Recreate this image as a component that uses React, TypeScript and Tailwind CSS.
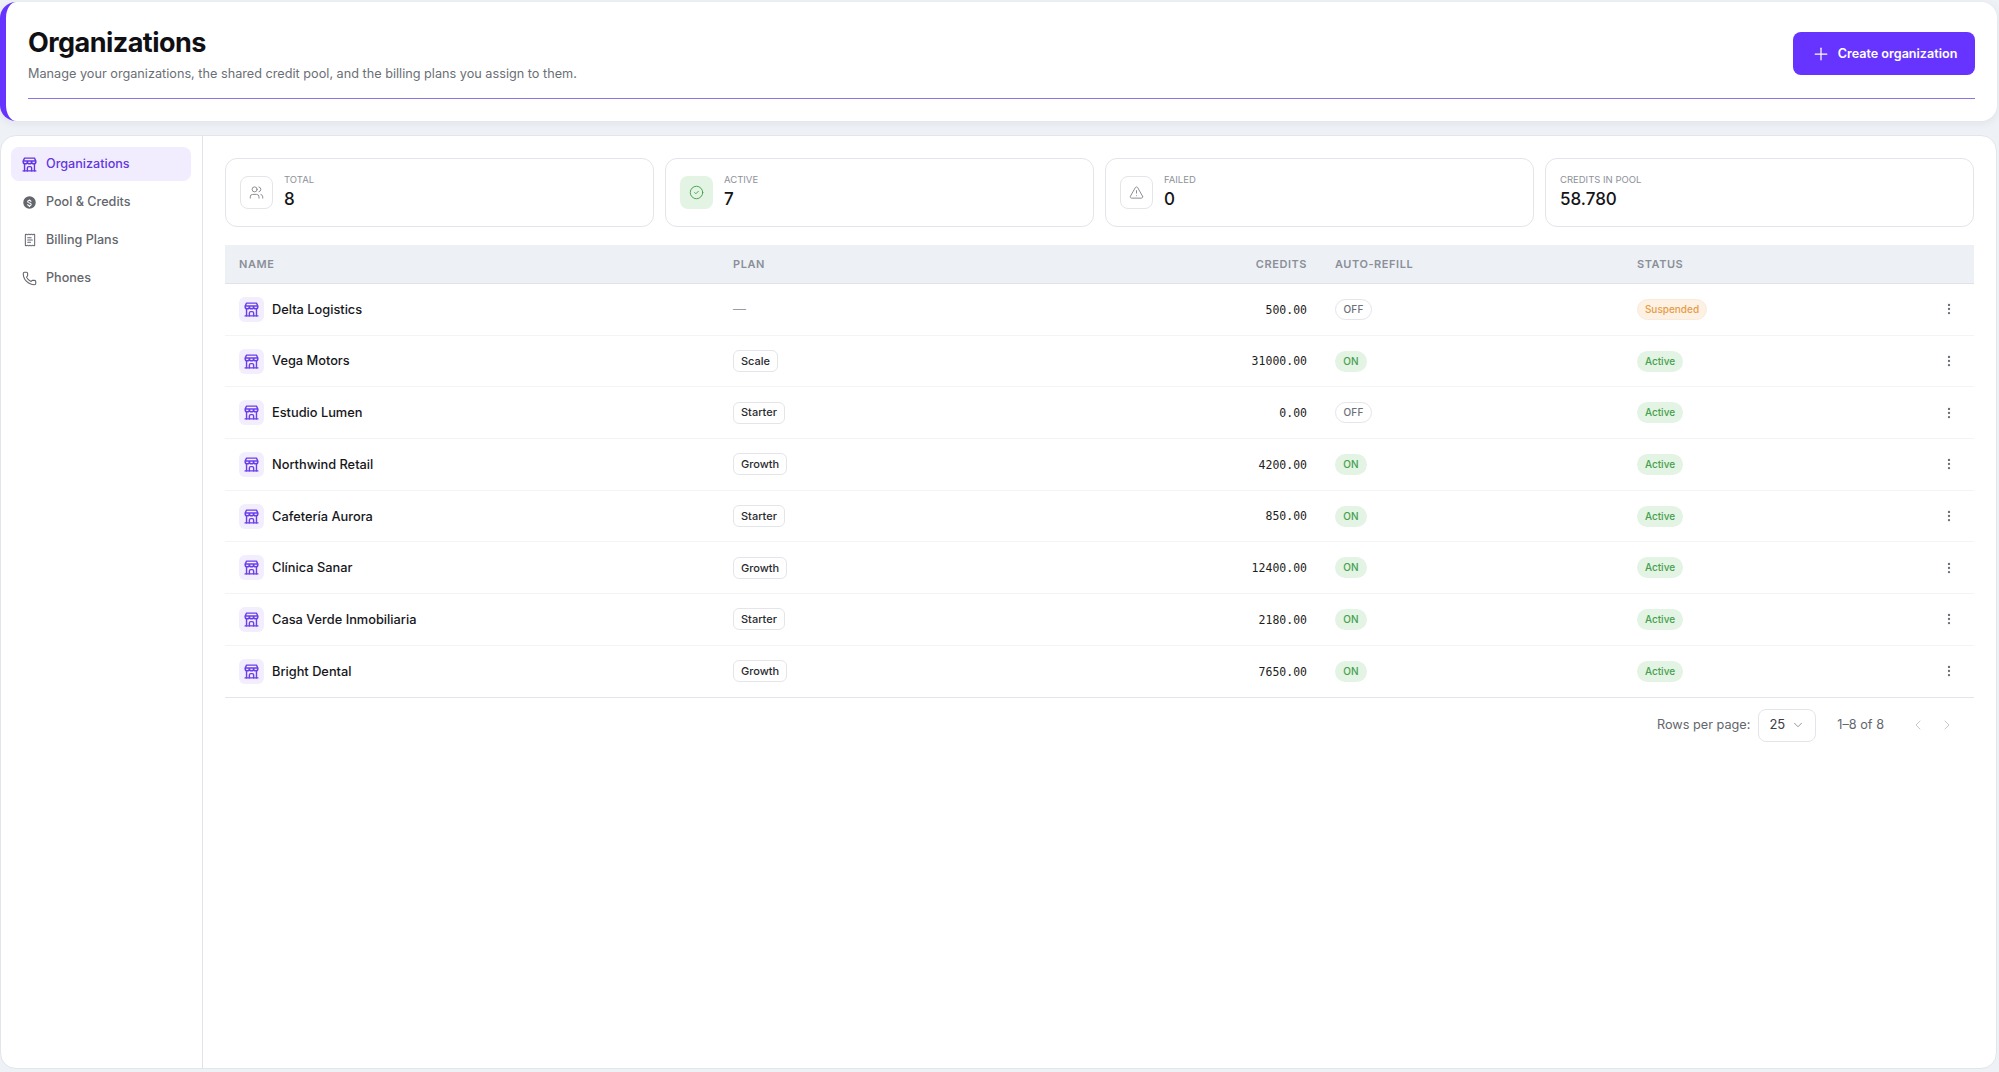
import { Plus, Users, CircleCheck, TriangleAlert, Phone, ReceiptText, EllipsisVertical, ChevronDown, ChevronLeft, ChevronRight } from "lucide-react";
import { TbBuildingStore } from "react-icons/tb";

function Dollar({ className }: { className?: string }) {
  return (
    <svg viewBox="0 0 24 24" className={className} fill="currentColor">
      <path d="M12 2a10 10 0 1 0 0 20 10 10 0 0 0 0-20zm1 15.900V19h-2v-1.100c-1.600-.3-2.900-1.300-3-3h2c.1.900.8 1.400 2 1.400 1.300 0 1.800-.6 1.800-1.200 0-.7-.5-1.200-2.200-1.700-2-.5-3.300-1.300-3.300-2.900 0-1.400 1.100-2.400 2.700-2.700V7h2v1.100c1.500.4 2.300 1.500 2.400 2.700h-2c-.1-.9-.6-1.400-1.700-1.400-1.100 0-1.700.5-1.700 1.200 0 .6.5 1 2.200 1.500 1.800.5 3.300 1.200 3.300 3.100 0 1.400-1 2.400-2.500 2.700z" />
    </svg>
  );
}

const nav = [
  { label: "Organizations", icon: <TbBuildingStore className="size-[17px]" /> },
  { label: "Pool & Credits", icon: <Dollar className="size-[15px]" /> },
  { label: "Billing Plans", icon: <ReceiptText className="size-[14px]" strokeWidth={1.75} /> },
  { label: "Phones", icon: <Phone className="size-[15px]" strokeWidth={1.75} /> },
];

const rows = [
  { name: "Delta Logistics", plan: "—", credits: "500.00", refill: "OFF", status: "Suspended" },
  { name: "Vega Motors", plan: "Scale", credits: "31000.00", refill: "ON", status: "Active" },
  { name: "Estudio Lumen", plan: "Starter", credits: "0.00", refill: "OFF", status: "Active" },
  { name: "Northwind Retail", plan: "Growth", credits: "4200.00", refill: "ON", status: "Active" },
  { name: "Cafetería Aurora", plan: "Starter", credits: "850.00", refill: "ON", status: "Active" },
  { name: "Clínica Sanar", plan: "Growth", credits: "12400.00", refill: "ON", status: "Active" },
  { name: "Casa Verde Inmobiliaria", plan: "Starter", credits: "2180.00", refill: "ON", status: "Active" },
  { name: "Bright Dental", plan: "Growth", credits: "7650.00", refill: "ON", status: "Active" },
];

const gridCols = "grid grid-cols-[494px_322px_280px_302px_299px_52px] items-center";

function StatCard({ label, value, icon }: { label: string; value: string; icon?: React.ReactNode }) {
  return (
    <div className="flex h-[69px] items-center gap-[11px] rounded-xl border border-[#e3e5ea] bg-white pb-[1px] pl-[14px]">
      {icon}
      <div className="flex flex-col">
        <span className="text-[9.5px] leading-[14px] font-normal text-[#8d9198] uppercase">{label}</span>
        <span className="text-[17px] leading-[24px] font-medium text-[#141418]">{value}</span>
      </div>
    </div>
  );
}

export default function App() {
  return (
    <div className="flex h-screen flex-col gap-[14px] overflow-hidden bg-[#eef1f5] pt-[2px] pr-[2px] pb-[3px] font-['Inter',sans-serif] text-[#141418]">
      <header className="flex h-[119px] shrink-0 flex-col rounded-2xl border-l-[6px] border-[#6633ff] bg-white pt-[30px] pr-[22px] pl-[22px] shadow-[0_2px_8px_rgba(30,40,70,0.07)]">
        <div className="flex h-[43px] items-start justify-between">
          <div className="-mt-[8px]">
            <h1 className="text-[27px] leading-[38px] font-bold tracking-[-0.54px] text-[#101014]">Organizations</h1>
            <p className="mt-[3px] text-[12.7px] leading-[18px] text-[#6b6f76]">
              Manage your organizations, the shared credit pool, and the billing plans you assign to them.
            </p>
          </div>
          <button className="flex h-[43px] w-[182px] items-center justify-center gap-[7px] rounded-lg bg-[#6633ff] pt-[1px] text-[12.6px] font-semibold text-white">
            <Plus className="size-[20px]" strokeWidth={1.5} />
            Create organization
          </button>
        </div>
        <div className="mt-[23px] h-px w-full bg-[#8f73e0]" />
      </header>

      <main className="flex min-h-0 flex-1 rounded-2xl border border-[#e2e5ea] bg-white">
        <aside className="w-[202px] shrink-0 border-r border-[#e0e2e7] px-[10px] pt-[11px]">
          <nav className="flex w-[180px] flex-col gap-[4px]">
            {nav.map(({ label, icon }, i) => (
              <a
                key={label}
                className={
                  i === 0
                    ? "flex h-[34px] items-center gap-[8px] rounded-lg bg-[#f2edfe] pl-[10px] text-[12.6px] font-medium text-[#6236e0]"
                    : "flex h-[34px] items-center gap-[8px] rounded-lg pl-[10px] text-[12.6px] font-medium text-[#63666c]"
                }
              >
                <span className="flex size-[17px] shrink-0 items-center justify-center">{icon}</span>
                {label}
              </a>
            ))}
          </nav>
        </aside>

        <section className="min-w-0 flex-1 pt-[22px] pr-[22px] pl-[22px]">
          <div className="grid grid-cols-4 gap-[11px]">
            <StatCard
              label="Total"
              value="8"
              icon={
                <span className="flex size-[33px] items-center justify-center rounded-lg border border-[#e3e5ea] text-[#85888e]">
                  <Users className="size-[15px]" strokeWidth={1.5} />
                </span>
              }
            />
            <StatCard
              label="Active"
              value="7"
              icon={
                <span className="flex size-[33px] items-center justify-center rounded-lg bg-[#e3f3e4] text-[#43a04a]">
                  <CircleCheck className="size-[15px]" strokeWidth={1.5} />
                </span>
              }
            />
            <StatCard
              label="Failed"
              value="0"
              icon={
                <span className="flex size-[33px] items-center justify-center rounded-lg border border-[#e3e5ea] text-[#85888e]">
                  <TriangleAlert className="size-[15px]" strokeWidth={1.5} />
                </span>
              }
            />
            <StatCard label="Credits in pool" value="58.780" />
          </div>

          <div className={`mt-[18px] h-[39px] border-b border-[#dfe3e9] bg-[#edf1f6] text-[11px] font-semibold tracking-[0.55px] text-[#8b8f97] uppercase ${gridCols}`}>
            <div className="pl-[14px]">Name</div>
            <div className="pl-[14px]">Plan</div>
            <div className="pr-[14px] text-right">Credits</div>
            <div className="pl-[14px]">Auto-refill</div>
            <div className="pl-[14px]">Status</div>
            <div />
          </div>

          {rows.map((r, i) => (
            <div
              key={r.name}
              className={`h-[51.7px] border-b ${i === rows.length - 1 ? "border-[#e3e5ea]" : "border-[#f3f4f6]"} ${gridCols}`}
            >
              <div className="flex items-center gap-[8px] pl-[14px] text-[12.8px] font-medium text-[#17171b]">
                <span className="flex size-[25px] items-center justify-center rounded-md bg-[#f3eefe] text-[#6a3fe8]">
                  <TbBuildingStore className="size-[17px]" />
                </span>
                {r.name}
              </div>
              <div className="flex items-center pl-[14px]">
                {r.plan === "—" ? (
                  <span className="text-[13px] text-[#9a9da3]">—</span>
                ) : (
                  <span className="flex h-[22px] items-center rounded-md border border-[#e3e5ea] px-[7px] text-[11px] font-medium text-[#2a2b30]">
                    {r.plan}
                  </span>
                )}
              </div>
              <div className="pt-[2px] pr-[14px] text-right font-['DejaVu_Sans_Mono',monospace] text-[11.5px] text-[#1d1d22]">{r.credits}</div>
              <div className="flex items-center pl-[14px]">
                {r.refill === "ON" ? (
                  <span className="flex h-[21px] w-[32px] items-center justify-center rounded-full bg-[#e3f3e4] text-[10px] font-medium tracking-[0.2px] text-[#46a04c]">ON</span>
                ) : (
                  <span className="flex h-[21px] w-[37px] items-center justify-center rounded-full border border-[#e3e5ea] text-[10px] font-medium tracking-[0.2px] text-[#6b6f76]">OFF</span>
                )}
              </div>
              <div className="flex items-center pl-[14px]">
                {r.status === "Active" ? (
                  <span className="flex h-[21px] w-[46px] items-center justify-center rounded-full bg-[#e3f3e4] text-[10px] font-medium text-[#46a04c]">Active</span>
                ) : (
                  <span className="flex h-[21px] w-[70px] items-center justify-center rounded-full border border-[#faeadb] bg-[#fdf1e3] text-[10px] font-medium text-[#e79c46]">Suspended</span>
                )}
              </div>
              <div className="flex justify-center pl-[2px] text-[#6b6f76]">
                <EllipsisVertical className="size-[14px]" strokeWidth={2} />
              </div>
            </div>
          ))}

          <div className="mt-[11px] flex h-[33px] items-center justify-end pr-[19px] text-[12.7px] text-[#63666c]">
            <span>Rows per page:</span>
            <span className="ml-[8px] flex h-[33px] w-[58px] items-center justify-center gap-[6px] rounded-lg border border-[#e3e5ea] text-[13px] text-[#3d3e44]">
              25
              <ChevronDown className="size-[14px] text-[#85888e]" strokeWidth={1.5} />
            </span>
            <span className="ml-[21px]">1–8 of 8</span>
            <ChevronLeft className="ml-[26px] size-[16px] text-[#c6c8cc]" strokeWidth={1.5} />
            <ChevronRight className="ml-[13px] size-[16px] text-[#c6c8cc]" strokeWidth={1.5} />
          </div>
        </section>
      </main>
    </div>
  );
}
